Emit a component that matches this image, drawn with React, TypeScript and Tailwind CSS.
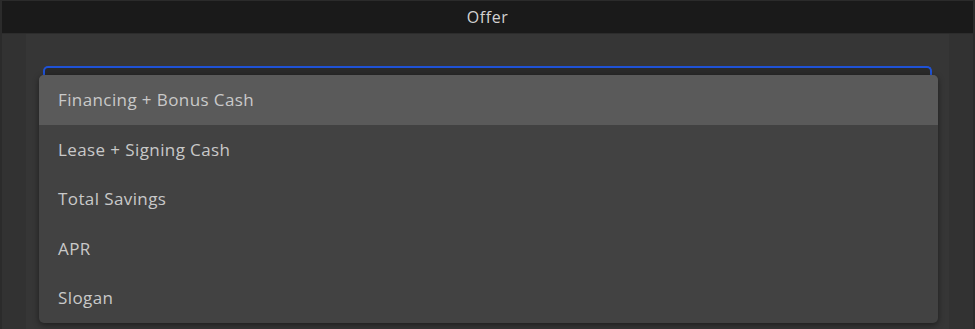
const options = [
  "Financing + Bonus Cash",
  "Lease + Signing Cash",
  "Total Savings",
  "APR",
  "Slogan",
];

export default function App() {
  const selected = 0;
  return (
    <div className="flex h-[329px] w-[975px] flex-col overflow-hidden border-x-2 border-t border-[#2b2b2b] bg-[#323232] font-['Open_Sans',sans-serif]">
      <div className="flex h-[33px] shrink-0 items-center justify-center border-b border-[#2c2c2c] bg-[#1a1a1a] text-[16px] tracking-[0.6px] text-[#d2d2d2]">
        Offer
      </div>
      <div className="flex flex-1 px-[24px]">
        <div className="flex-1 bg-[#363636] pt-[32px]">
          <div className="relative mx-[17px] h-[48px] rounded-[5px] border-2 border-b-0 border-[#1f52d6] bg-[#2a2a2a]">
            <div className="absolute left-[-6px] right-[-8px] top-[7px] overflow-hidden rounded-[5px] bg-[#424242] shadow-[0_2px_6px_rgba(0,0,0,0.45)]">
              {options.map((opt, i) => (
                <div
                  key={opt}
                  className={
                    i === selected
                      ? "flex h-[49.5px] items-center bg-[#5a5a5a] pl-[19px] text-[17px] tracking-[0.4px] text-[#c9c9c9]"
                      : "flex h-[49.5px] items-center pl-[19px] text-[17px] tracking-[0.4px] text-[#c9c9c9]"
                  }
                >
                  {opt}
                </div>
              ))}
            </div>
          </div>
        </div>
      </div>
    </div>
  );
}
